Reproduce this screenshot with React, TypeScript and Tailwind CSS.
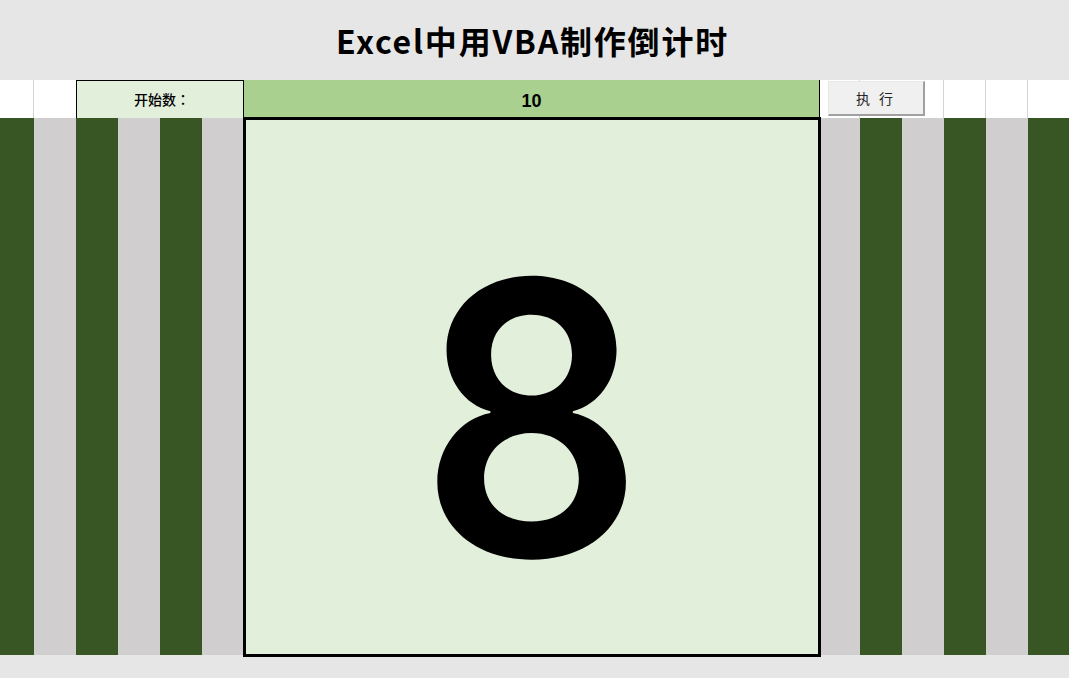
import React from "react";

const G = "bg-[#375623]";
const S = "bg-[#d0cece]";

export default function App() {
  const left = [
    { w: "w-[34px]", c: G },
    { w: "w-[42px]", c: S },
    { w: "w-[42px]", c: G },
    { w: "w-[42px]", c: S },
    { w: "w-[42px]", c: G },
    { w: "w-[42px]", c: S },
  ];
  const right = [
    { w: "w-[40px]", c: S },
    { w: "w-[42px]", c: G },
    { w: "w-[42px]", c: S },
    { w: "w-[42px]", c: G },
    { w: "w-[42px]", c: S },
    { w: "w-[41px]", c: G },
  ];
  return (
    <div className="w-[1069px] h-[678px] bg-[#e7e6e6] flex flex-col overflow-hidden" style={{ fontFamily: '"Noto Sans CJK SC", "Noto Sans", sans-serif' }}>
      <div className="h-[80px] flex items-center justify-center">
        <span className="text-[32px] font-bold text-black leading-none tracking-[1.8px] pr-[4px]">Excel中用VBA制作倒计时</span>
      </div>
      <div className="h-[38px] flex bg-white">
        <div className="w-[34px] border-r border-[#d4d4d4]"></div>
        <div className="w-[42px]"></div>
        <div className="w-[168px] bg-[#e2efda] border border-black border-b-0 flex items-center justify-center text-[14px] font-medium text-black pl-[4px]">
          开始数<span style={{ fontFamily: '"Noto Sans CJK TC", sans-serif' }}>：</span>
        </div>
        <div className="w-[576px] bg-[#a9d08e] border-r border-black flex items-center justify-center">
          <span className="text-[18px] font-bold text-black pt-[5px]" style={{ fontFamily: '"Liberation Sans", sans-serif' }}>10</span>
        </div>
        <div className="w-[40px] border-r border-[#d4d4d4] relative">
          <button className="absolute left-[8px] top-[1px] w-[97px] h-[35px] bg-[#f0f0f0] border border-t-[#e8e8e8] border-l-[#e8e8e8] border-r-2 border-b-2 border-r-[#a0a0a0] border-b-[#a0a0a0] text-[14px] text-[#222] tracking-[3px] z-10 flex items-center justify-center">
            执 行
          </button>
        </div>
        <div className="w-[84px] border-r border-[#d4d4d4]"></div>
        <div className="w-[42px] border-r border-[#d4d4d4]"></div>
        <div className="w-[42px] border-r border-[#d4d4d4]"></div>
        <div className="w-[41px]"></div>
      </div>
      <div className="h-[537px] flex">
        {left.map((c, i) => (
          <div key={"l" + i} className={`${c.w} ${c.c} h-full`}></div>
        ))}
        <div className="w-[578px] h-[540px] -mt-[1px] -mx-[1px] border-[3px] border-black bg-[#e2efda] flex justify-center relative z-[1] box-border shrink-0 overflow-hidden">
          <div className="pt-[108px]">
            <div className="text-[380px] font-semibold leading-none text-black scale-x-[0.92]" style={{ fontFamily: '"Inter", sans-serif' }}>8</div>
          </div>
        </div>
        {right.map((c, i) => (
          <div key={"r" + i} className={`${c.w} ${c.c} h-full`}></div>
        ))}
      </div>
    </div>
  );
}
